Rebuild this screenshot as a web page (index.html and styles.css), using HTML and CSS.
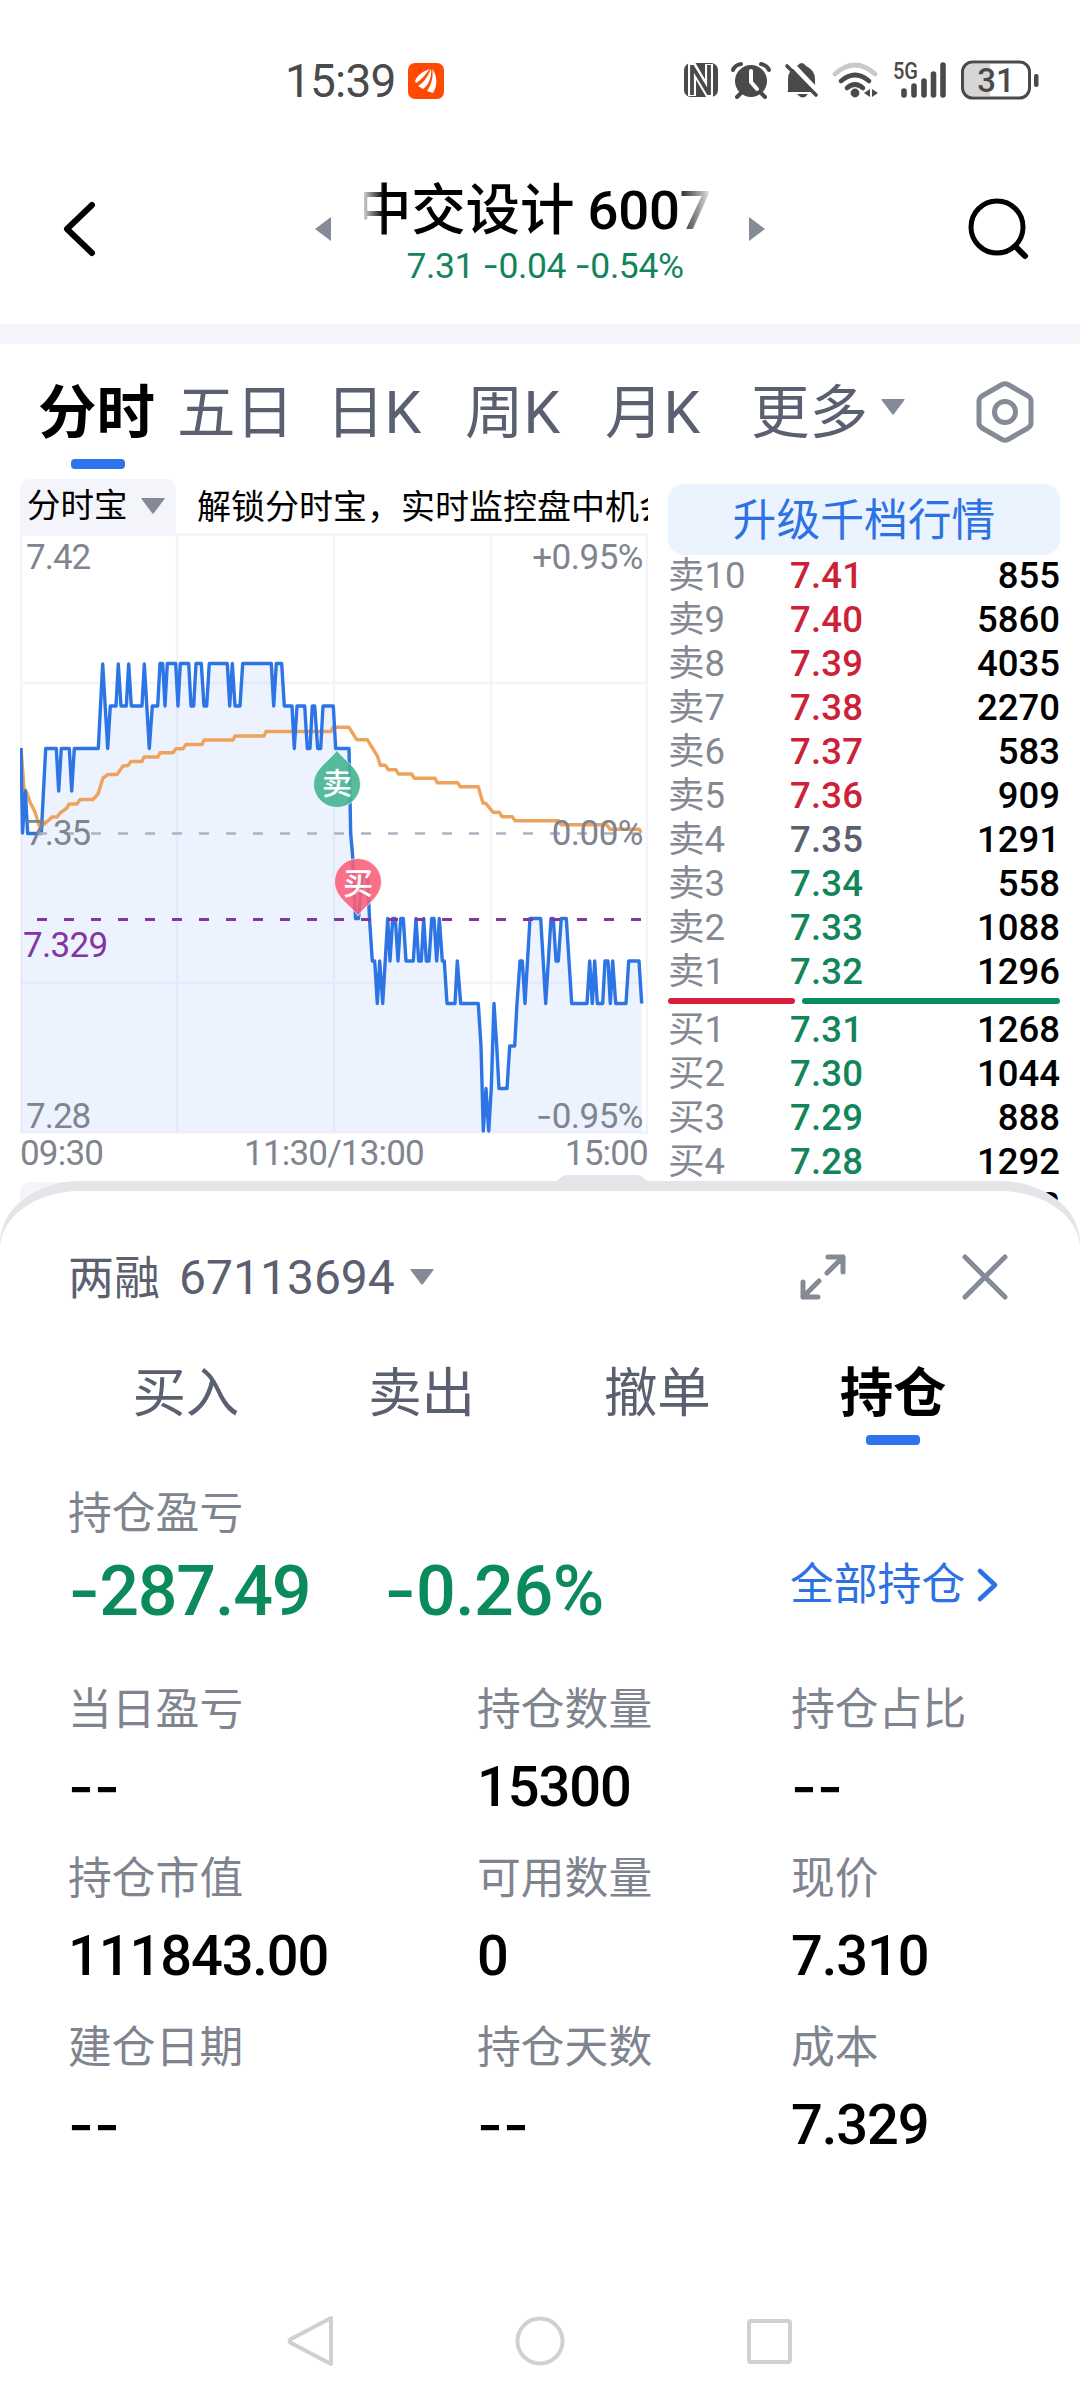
FILE: index.html
```
<!DOCTYPE html>
<html lang="zh-CN">
<head>
<meta charset="UTF-8">
<meta name="viewport" content="width=device-width, initial-scale=1.0">
<title>中交设计 分时</title>
<link rel="stylesheet" href="styles.css">
</head>
<body>
<div class="screen">
    <div class="status-bar">
        <div class="status-left">
            <span class="time">15:39</span>
            <svg width="36" height="36" viewBox="0 0 36 36">
                <rect width="36" height="36" rx="7" fill="#ff4a03"/>
                <path d="M7 18C10 11 16 8 22 6C18 10 16 15 8 20ZM10 23C17 19 20 12 23 6C24 13 21 22 15 26ZM19 28C24 21 25 14 24.500 6C29 13 30 22 25 30Z" fill="#fff"/>
            </svg>
        </div>
        <div class="status-right">
            <svg width="356" height="40" viewBox="684 60 356 40">
                <!-- nfc -->
                <rect x="684" y="63" width="34" height="34" rx="7" fill="#4a4a4a"/>
                <path d="M692 96V65L709 94V64" fill="none" stroke="#fff" stroke-width="8"/>
                <path d="M692 65V95M709 65V95M692 66L709 94" fill="none" stroke="#4a4a4a" stroke-width="3.800"/>
                <!-- alarm -->
                <circle cx="751" cy="81" r="16" fill="#4a4a4a"/>
                <path d="M741 93L737 97M761 93L765 97M733 70Q735 65 741 64M769 70Q767 65 761 64" stroke="#4a4a4a" stroke-width="4" stroke-linecap="round" fill="none"/>
                <path d="M751 71V82L757 89" stroke="#fff" stroke-width="4" fill="none" stroke-linecap="round"/>
                <!-- muted bell -->
                <path d="M788 91V79Q788 70 797 66Q802 60 806 66Q815 70 815 79V88L818 92H787Z" fill="#4a4a4a"/>
                <path d="M797 94H808Q803 101 797 94Z" fill="#4a4a4a"/>
                <path d="M790 62L820 94" stroke="#fff" stroke-width="5"/>
                <path d="M787 66L816 95" stroke="#4a4a4a" stroke-width="3.600" stroke-linecap="round"/>
                <!-- wifi -->
                <g fill="none" stroke-linecap="round" stroke-width="4.600">
                    <path d="M835 74Q855 56 875 74" stroke="#c9c9c9"/>
                    <path d="M841 81Q855 69 869 81" stroke="#4a4a4a"/>
                    <path d="M847 88Q855 81 863 88" stroke="#4a4a4a"/>
                </g>
                <circle cx="855" cy="93" r="4.400" fill="#4a4a4a"/>
                <path d="M870 89V97L864 93ZM872 89V97L878 93Z" fill="#4a4a4a"/>
                <!-- signal -->
                <text x="893" y="79" class="net-label" textLength="25" lengthAdjust="spacingAndGlyphs">5G</text>
                <path d="M904 95V91M914 95V86M924 95V81M933.500 95V74M943 95V65" stroke="#4a4a4a" stroke-width="5.600" stroke-linecap="round"/>
                <!-- battery -->
                <path d="M970 64H990V96H970Q963 96 963 88V72Q963 64 970 64Z" fill="#d6d6d6"/>
                <rect x="962.500" y="62" width="67" height="36" rx="10" fill="none" stroke="#4a4a4a" stroke-width="3"/>
                <rect x="1034" y="74" width="4.500" height="13" rx="2" fill="#4a4a4a"/>
                <text x="996" y="92" class="battery-label" text-anchor="middle">31</text>
            </svg>
        </div>
    </div>

    <div class="header">
        <svg class="back" width="40" height="60" viewBox="0 0 40 60"><path d="M32 6L7 30L32 54" fill="none" stroke="#000" stroke-width="6" stroke-linecap="round" stroke-linejoin="round"/></svg>
        <div class="stock">
            <svg width="18" height="26" viewBox="0 0 18 26"><path d="M17 1V25L1 13Z" fill="#858a97"/></svg>
            <div class="stock-info">
                <div class="stock-name"><span>中交设计 6007</span></div>
                <div class="stock-quote">7.31 <i>-</i>0.04 <i>-</i>0.54%</div>
            </div>
            <svg width="18" height="26" viewBox="0 0 18 26"><path d="M1 1V25L17 13Z" fill="#858a97"/></svg>
        </div>
        <svg class="search" width="64" height="64" viewBox="0 0 64 64"><circle cx="30" cy="30" r="26" fill="none" stroke="#000" stroke-width="5"/><path d="M49 50L58 59" stroke="#000" stroke-width="6" stroke-linecap="round"/></svg>
    </div>
    <div class="divider"></div>

    <div class="period-tabs">
        <span class="period active">分时</span>
        <span class="period five">五日</span>
        <span class="period day">日K</span>
        <span class="period week">周K</span>
        <span class="period month">月K</span>
        <span class="period more">更多</span>
        <svg width="26" height="18" viewBox="0 0 26 18"><path d="M2 1H24Q25 1 24.500 2L14 16Q13 17 12 16L1.500 2Q1 1 2 1Z" fill="#858a97"/></svg>
        <svg class="settings" width="60" height="64" viewBox="0 0 60 64"><path d="M27 4.500Q30 3 33 4.500L53 16Q56 18 56 21V43Q56 46 53 48L33 59.500Q30 61 27 59.500L7 48Q4 46 4 43V21Q4 18 7 16Z" fill="none" stroke="#858a97" stroke-width="5"/><circle cx="30" cy="32" r="10.500" fill="none" stroke="#858a97" stroke-width="5"/></svg>
    </div>

    <div class="market">
        <div class="chart-col">
            <div class="notice">
                <div class="notice-btn">分时宝
                    <svg width="26" height="18" viewBox="0 0 26 18"><path d="M2 1H24Q25 1 24.500 2L14 16Q13 17 12 16L1.500 2Q1 1 2 1Z" fill="#858a97"/></svg>
                </div>
                <div class="notice-text">解锁分时宝，实时监控盘中机会</div>
            </div>
            <svg class="chart" width="628" height="601" viewBox="20 533 628 601">
                <path d="M21 534.500H647V1132.500H21ZM177 534V1132M334 534V1132M491 534V1132M21 683H647M21 983H647" fill="none" stroke="#f3f4fa" stroke-width="2.600"/>
                <path class="price-area" d="M21 748L22.500 833L25.300 791L27.700 833.500H41.300L45.700 748.500H56.300L58.700 791L61.300 748.500H69.300L71.700 791L74.300 748.500H98.300L102.700 664L107.700 748.500L110.300 706H116L118.300 664L121 706H126.300L128.700 664L131.300 706H142L144.300 664L149.300 748.500L152.300 706H157.700L160 663.500H162.700L165 706L167.300 663.500H175.700L178 706L180.300 663.500H188.700L191 706H193.700L196 663.500H201.300L204 706H206.700L209.300 663.500H227.300L229.700 706L232.300 663.500L235 706H240L242.700 663.500H271.300L273.700 706L276.300 663.500H281.700L284.300 706H292L294.300 748.500L297 706H304.700L307.300 748.500H310L312.300 706H314.700L317.700 748.500H320.700L323 706H333.300L335.700 748.500H349L350.700 833.500L352.700 857L355.500 918.500H358.500L362 876H367.500L369.500 918.500L372.300 961H374.700L377.300 1003.500L379.700 961L382.700 1003.500L387.700 918.500L390 961L392.700 918.500H395.300L398 961L400.700 918.500H403.300L406 961H413.300L416 918.500L418.700 961H421.300L423.700 918.500L426.300 961H429L431.700 918.500H434L436.700 961L439.300 918.500L442.300 961H444.300L447 1003.500H455L457.300 961L460.700 1003.500H478.300L481 1046L483.300 1131L486 1088.500L488.700 1131L491.300 1088L494 1003.500L496.700 1046L499 1088.500H507L509.700 1046H514.700L517 1003.500L520 961H522.300L525 1003.500L530 918.500H540.700L545.700 1003.500L551 918.500H553.300L556 961H558.300L561.300 918.500H566.300L571.700 1003.500H587L589.700 961L592.300 1003.500L594.700 961L597.300 1003.500H602.700L605 961H608L610.300 1003.500L612.700 961L615.700 1003.500H626L628.700 961H639L641.700 1003.500V1132H21Z"/>
                <path d="M21 748L24 788L27 793L30 802L35 812L39 825H43L49 820L52 817H57L60 813L67 808L69 804H77L80 799.500H93L98 794L103 778L108 774.500H117L123 766L128 765.500L131 761.500H142L144 757H158L160 752.800H173L176 748.700H183L186 744.500H202L204 740H233L235 736H264L266 731.500H331L333 727.300H349L356.700 739.700H367.300L377.700 756.700L380.300 765.300H385.300L388.300 769.700H396L398.300 774H411.700L414.300 778.300H435L437.300 782.700H457.700L460.300 786.700H478.300L483 803.300H485.700L493.300 812.300H499.300L502 816.700H512.300L515 820.700H558.300L561 824.700H606.700L610 829.300H639.300L641 833" fill="none" stroke="#eda35c" stroke-width="3.400" stroke-linejoin="round"/>
                <path class="price-line" d="M21 748L22.500 833L25.300 791L27.700 833.500H41.300L45.700 748.500H56.300L58.700 791L61.300 748.500H69.300L71.700 791L74.300 748.500H98.300L102.700 664L107.700 748.500L110.300 706H116L118.300 664L121 706H126.300L128.700 664L131.300 706H142L144.300 664L149.300 748.500L152.300 706H157.700L160 663.500H162.700L165 706L167.300 663.500H175.700L178 706L180.300 663.500H188.700L191 706H193.700L196 663.500H201.300L204 706H206.700L209.300 663.500H227.300L229.700 706L232.300 663.500L235 706H240L242.700 663.500H271.300L273.700 706L276.300 663.500H281.700L284.300 706H292L294.300 748.500L297 706H304.700L307.300 748.500H310L312.300 706H314.700L317.700 748.500H320.700L323 706H333.300L335.700 748.500H349L350.700 833.500L352.700 857L355.500 918.500H358.500L362 876H367.500L369.500 918.500L372.300 961H374.700L377.300 1003.500L379.700 961L382.700 1003.500L387.700 918.500L390 961L392.700 918.500H395.300L398 961L400.700 918.500H403.300L406 961H413.300L416 918.500L418.700 961H421.300L423.700 918.500L426.300 961H429L431.700 918.500H434L436.700 961L439.300 918.500L442.300 961H444.300L447 1003.500H455L457.300 961L460.700 1003.500H478.300L481 1046L483.300 1131L486 1088.500L488.700 1131L491.300 1088L494 1003.500L496.700 1046L499 1088.500H507L509.700 1046H514.700L517 1003.500L520 961H522.300L525 1003.500L530 918.500H540.700L545.700 1003.500L551 918.500H553.300L556 961H558.300L561.300 918.500H566.300L571.700 1003.500H587L589.700 961L592.300 1003.500L594.700 961L597.300 1003.500H602.700L605 961H608L610.300 1003.500L612.700 961L615.700 1003.500H626L628.700 961H639L641.700 1003.500"/>
                <path d="M37 833.500H642" stroke="#adb3c3" stroke-width="2.600" stroke-dasharray="10 17"/>
                <path d="M37 919.500H642" stroke="#8236a3" stroke-width="3" stroke-dasharray="10 17"/>
                <!-- trade markers -->
                <path d="M337 750C342 759 360.500 768 360.500 784A23.500 23.500 0 0 1 313.500 784C313.500 768 332 759 337 750Z" fill="#45b592" fill-opacity=".9" stroke="#fff" stroke-opacity=".7"/>
                <text x="337" y="794" class="marker">卖</text>
                <path d="M358 916C353 907 334.500 898 334.500 882A23.500 23.500 0 0 1 381.500 882C381.500 898 363 907 358 916Z" fill="#fa5d77" fill-opacity=".88" stroke="#fff" stroke-opacity=".7"/>
                <text x="358" y="894" class="marker">买</text>
                <g class="scale">
                    <text x="26" y="569">7.42</text>
                    <text x="26" y="845">7.35</text>
                    <text x="26" y="1128">7.28</text>
                    <text x="643" y="569" class="percent">+0.95%</text>
                    <text x="643" y="845" class="percent">0.00%</text>
                    <text x="643" y="1128" class="percent"><tspan class="dash">-</tspan>0.95%</text>
                    <text x="23" y="957" class="cost">7.329</text>
                </g>
            </svg>
            <div class="time-axis"><span>09:30</span><span>11:30/13:00</span><span>15:00</span></div>
            <div class="sub-tools"><span class="sub-left"></span><span class="sub-right"></span></div>
        </div>

        <div class="book">
            <div class="upgrade">升级千档行情</div>
            <div class="row"><span>卖10</span><b class="up">7.41</b><em>855</em></div>
            <div class="row"><span>卖9</span><b class="up">7.40</b><em>5860</em></div>
            <div class="row"><span>卖8</span><b class="up">7.39</b><em>4035</em></div>
            <div class="row"><span>卖7</span><b class="up">7.38</b><em>2270</em></div>
            <div class="row"><span>卖6</span><b class="up">7.37</b><em>583</em></div>
            <div class="row"><span>卖5</span><b class="up">7.36</b><em>909</em></div>
            <div class="row"><span>卖4</span><b class="flat">7.35</b><em>1291</em></div>
            <div class="row"><span>卖3</span><b>7.34</b><em>558</em></div>
            <div class="row"><span>卖2</span><b>7.33</b><em>1088</em></div>
            <div class="row"><span>卖1</span><b>7.32</b><em>1296</em></div>
            <div class="ratio"><i class="ratio-sell"></i><i class="ratio-buy"></i></div>
            <div class="row"><span>买1</span><b>7.31</b><em>1268</em></div>
            <div class="row"><span>买2</span><b>7.30</b><em>1044</em></div>
            <div class="row"><span>买3</span><b>7.29</b><em>888</em></div>
            <div class="row"><span>买4</span><b>7.28</b><em>1292</em></div>
            <div class="row"><span></span><b></b><em>2</em></div>
        </div>
    </div>

    <div class="sheet-shade">
        <div class="sheet">
            <div class="account">
                <span class="account-type">两融</span>
                <span class="account-no">67113694</span>
                <svg width="26" height="18" viewBox="0 0 26 18"><path d="M2 1H24Q25 1 24.500 2L14 16Q13 17 12 16L1.500 2Q1 1 2 1Z" fill="#858a97"/></svg>
                <svg class="expand" width="46" height="46" viewBox="0 0 46 46"><path d="M28 3H43V18M43 3L27 19M18 43H3V28M3 43L19 27" fill="none" stroke="#858a97" stroke-width="5" stroke-linejoin="round" stroke-linecap="round"/></svg>
                <svg class="close" width="46" height="46" viewBox="0 0 46 46"><path d="M3 3L43 43M43 3L3 43" stroke="#858a97" stroke-width="5" stroke-linecap="round"/></svg>
            </div>
            <div class="trade-tabs">
                <span>买入</span>
                <span>卖出</span>
                <span>撤单</span>
                <span class="active">持仓</span>
            </div>
            <div class="profit-label">持仓盈亏</div>
            <div class="profit">
                <span class="amount"><i>-</i>287.49</span>
                <span class="rate"><i>-</i>0.26%</span>
                <span class="all">全部持仓
                    <svg width="22" height="34" viewBox="0 0 22 34"><path d="M3 3L18 17L3 31" fill="none" stroke="#2d72e4" stroke-width="4.500" stroke-linecap="round" stroke-linejoin="round"/></svg>
                </span>
            </div>
            <div class="position">
                <div class="cell"><label>当日盈亏</label><p><i>--</i></p></div>
                <div class="cell"><label>持仓数量</label><p>15300</p></div>
                <div class="cell"><label>持仓占比</label><p><i>--</i></p></div>
                <div class="cell"><label>持仓市值</label><p>111843.00</p></div>
                <div class="cell"><label>可用数量</label><p>0</p></div>
                <div class="cell"><label>现价</label><p>7.310</p></div>
                <div class="cell"><label>建仓日期</label><p><i>--</i></p></div>
                <div class="cell"><label>持仓天数</label><p><i>--</i></p></div>
                <div class="cell"><label>成本</label><p>7.329</p></div>
            </div>
            <div class="nav-bar">
                <svg width="50" height="56" viewBox="0 0 50 56"><path d="M45 5V51L5 30Q2 28 5 26Z" fill="none" stroke="#d0d0d0" stroke-width="4" stroke-linejoin="round"/></svg>
                <svg width="50" height="56" viewBox="0 0 50 56"><circle cx="25" cy="28" r="22.500" fill="none" stroke="#d0d0d0" stroke-width="4"/></svg>
                <svg width="50" height="56" viewBox="0 0 50 56"><rect x="5" y="8" width="41" height="41" rx="2" fill="none" stroke="#d0d0d0" stroke-width="4"/></svg>
            </div>
        </div>
    </div>
</div>
</body>
</html>
```
FILE: styles.css
```
* {
    box-sizing: border-box;
}
body {
    margin: 0;
    background-color: #fff;
    font-family: Roboto, "Noto Sans CJK SC", sans-serif;
}
i, em {
    font-style: normal;
}
svg {
    display: block;
    flex-shrink: 0;
}
.screen {
    position: relative;
    width: 1080px;
    height: 2400px;
    overflow: hidden;
    background-color: #fff;
}

/* Status bar */
.status-bar {
    height: 160px;
    padding: 60px 40px 0 285px;
    display: flex;
    justify-content: space-between;
}
.status-left {
    display: flex;
    gap: 12px;
    height: 42px;
    align-items: center;
}
.time {
    font-size: 46px;
    line-height: 42px;
    letter-spacing: -0.8px;
    color: #4a4a4a;
}
.net-label {
    font-size: 23px;
    font-weight: 500;
    fill: #4a4a4a;
}
.battery-label {
    font-size: 33px;
    font-weight: 500;
    fill: #4a4a4a;
}

/* Header */
.header {
    height: 164px;
    display: flex;
    align-items: flex-start;
    padding: 0 49px 0 60px;
}
.header .back {
    margin-top: 39px;
}
.header .search {
    margin-top: 37px;
    margin-left: auto;
}
.stock {
    display: flex;
    margin-left: 214px;
}
.stock > svg {
    margin-top: 56px;
}
.stock-info {
    width: 416px;
    padding: 17px 32px 0;
}
.stock-name {
    width: 346px;
    height: 66px;
    overflow: hidden;
    -webkit-mask-image: linear-gradient(to right, rgba(0,0,0,.2), #000 20px, #000 310px, rgba(0,0,0,.1));
    mask-image: linear-gradient(to right, rgba(0,0,0,.2), #000 20px, #000 310px, rgba(0,0,0,.1));
}
.stock-name span {
    display: block;
    margin-left: -7px;
    white-space: nowrap;
    font-size: 54.500px;
    font-weight: 500;
    line-height: 66px;
    letter-spacing: -0.2px;
}
.stock-quote {
    margin: 3px -10px 0 0;
    text-align: center;
    white-space: nowrap;
    font-size: 35.500px;
    line-height: 40px;
    letter-spacing: -0.4px;
    color: #12855b;
}
.stock-quote i, .dash, .profit i, .cell i {
    font-family: Inter, sans-serif;
}
.divider {
    height: 20px;
    background-color: #f4f5fa;
}

/* Period tabs */
.period-tabs {
    height: 135px;
    padding: 28px 45px 0 38px;
    display: flex;
    font-size: 58.500px;
    line-height: 83px;
    color: #5b6071;
}
.period-tabs svg {
    margin-top: 26px;
}
.period-tabs .settings {
    margin: 8px 0 0 auto;
}
.period.active {
    width: 139px;
    color: #000;
    font-weight: 700;
}
.period.active::after {
    content: "";
    display: block;
    width: 54px;
    height: 10px;
    margin: 4px 0 0 33px;
    border-radius: 4px;
    background-color: #2d74ee;
}
.five {
    width: 149px;
}
.day {
    width: 139px;
}
.week {
    width: 140px;
}
.month {
    width: 146px;
}
.more {
    width: 129px;
}

/* Chart and order book */
.market {
    display: flex;
    padding: 0 20px;
    justify-content: space-between;
}
.chart-col {
    width: 628px;
}
.notice {
    height: 54px;
    display: flex;
    overflow: hidden;
}
.notice-btn {
    width: 156px;
    padding-left: 7px;
    display: flex;
    align-items: center;
    gap: 12px;
    flex-shrink: 0;
    border-radius: 10px 10px 0 0;
    background-color: #f4f5fa;
    font-size: 33.500px;
    line-height: 56px;
}
.notice-text {
    flex: 1;
    margin-left: 21px;
    overflow: hidden;
    white-space: nowrap;
    font-size: 34px;
    line-height: 56px;
}
.price-area {
    fill: #2d74ee;
    fill-opacity: 0.085;
}
.price-line {
    fill: none;
    stroke: #2d74e4;
    stroke-width: 3.4;
    stroke-linejoin: round;
}
.marker {
    font-size: 30px;
    font-weight: 500;
    fill: #fff;
    text-anchor: middle;
}
.scale {
    font-size: 35px;
    letter-spacing: -1px;
    fill: #80848f;
}
.percent {
    text-anchor: end;
    letter-spacing: -0.5px;
}
.cost {
    fill: #8236a3;
    letter-spacing: -0.7px;
}
.time-axis {
    height: 41px;
    display: flex;
    justify-content: space-between;
    font-size: 35px;
    line-height: 40px;
    letter-spacing: -0.8px;
    color: #80848f;
}
.sub-tools {
    display: flex;
    justify-content: space-between;
}
.sub-left {
    width: 156px;
    height: 54px;
    margin-top: 7px;
    border-radius: 10px;
    background-color: #f4f5fa;
}
.sub-right {
    width: 92px;
    height: 54px;
    border-radius: 12px;
    background-color: #e4e5e9;
}
.book {
    width: 392px;
    padding-top: 5px;
}
.upgrade {
    height: 71px;
    margin-bottom: -2px;
    border-radius: 16px;
    background-color: #ebf3fe;
    text-align: center;
    font-size: 43.800px;
    line-height: 75px;
    color: #2d72e4;
}
.row {
    display: flex;
    height: 44px;
    font-size: 36.500px;
    line-height: 46px;
}
.row span {
    width: 122px;
    color: #858893;
    font-size: 36.500px;
}
.row b {
    font-weight: 500;
    letter-spacing: 0.2px;
    color: #12855b;
}
.row em {
    margin-left: auto;
    font-weight: 500;
}
.row .up {
    color: #cb2238;
}
.row .flat {
    color: #5b6071;
}
.ratio {
    display: flex;
    gap: 7px;
    height: 6px;
    margin: 5px 0 3px;
}
.ratio i {
    border-radius: 3px;
}
.ratio-sell {
    width: 127px;
    background-color: #d81e3a;
}
.ratio-buy {
    flex: 1;
    background-color: #0b8a5b;
}

/* Bottom sheet */
.sheet-shade {
    position: absolute;
    left: 0;
    right: 0;
    top: 1181px;
    bottom: 0;
    padding-top: 10px;
    border-radius: 80px 80px 0 0 / 62px 62px 0 0;
    background-color: #e4e5e9;
}
.sheet {
    height: 1209px;
    padding: 57px 69px 0 68px;
    border-radius: 80px 80px 0 0 / 58px 58px 0 0;
    background-color: #fff;
}
.account {
    display: flex;
    height: 60px;
    align-items: center;
    line-height: 60px;
    color: #5b6071;
}
.account-type {
    width: 111px;
    font-size: 46px;
}
.account-no {
    width: 230px;
    font-size: 48px;
}
.account svg {
    margin-top: -2px;
}
.account .expand {
    margin-left: auto;
}
.account .close {
    margin-left: 116px;
    margin-right: 3px;
}
.trade-tabs {
    display: flex;
    margin-top: 44px;
    height: 119px;
    font-size: 53.500px;
    line-height: 83px;
    color: #5b6071;
}
.trade-tabs span {
    flex: 1;
    text-align: center;
}
.trade-tabs .active {
    color: #000;
    font-weight: 700;
}
.trade-tabs .active::after {
    content: "";
    display: block;
    width: 54px;
    height: 10px;
    margin: 0 auto;
    border-radius: 4px;
    background-color: #2d74ee;
}
.profit-label {
    margin-top: 12px;
    height: 60px;
    font-size: 43.800px;
    line-height: 63px;
    color: #80848f;
}
.profit {
    display: flex;
    height: 93px;
    line-height: 93px;
    color: #0b8a5b;
}
.amount, .rate {
    width: 316px;
    font-size: 70px;
    font-weight: 500;
    letter-spacing: -1.2px;
}
.rate {
    width: 406px;
    letter-spacing: -0.5px;
}
.all {
    display: flex;
    align-items: center;
    gap: 12px;
    font-size: 43.800px;
    line-height: 85px;
    height: 84px;
    color: #2d72e4;
}
.position {
    display: grid;
    grid-template-columns: 409px 314px 1fr;
    grid-auto-rows: 169px;
    margin-top: 43px;
}
.cell label {
    display: block;
    height: 60px;
    font-size: 43.800px;
    line-height: 63px;
    color: #80848f;
}
.cell p {
    margin: 10px 0 0;
    font-size: 56px;
    font-weight: 500;
    line-height: 76px;
    letter-spacing: -1.1px;
}
.cell i {
    letter-spacing: 0;
}
.nav-bar {
    display: flex;
    justify-content: center;
    gap: 179px;
    margin-top: 127px;
}
```
